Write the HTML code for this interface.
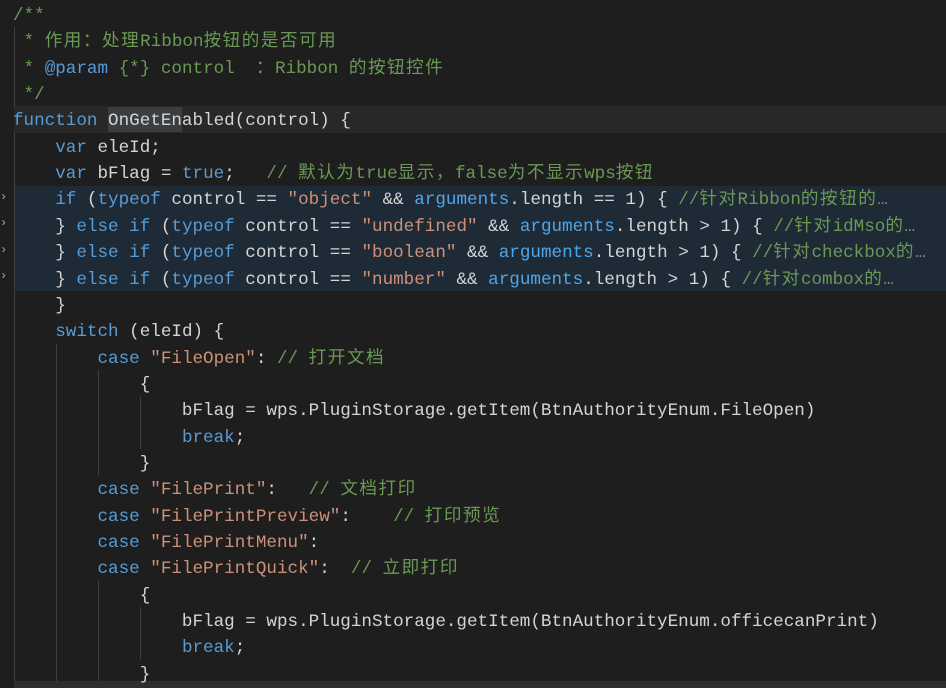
<!DOCTYPE html>
<html><head><meta charset="utf-8"><style>
body{margin:0;width:946px;height:688px;background:#1e1e1e;overflow:hidden;position:relative;font-family:"Liberation Mono","Noto Sans CJK SC",monospace;font-size:17.6px;color:#d4d4d4}
.l{position:absolute;left:13px;white-space:pre;height:26.35px;line-height:26.35px;margin-top:2px}
.k{color:#569cd6}.s{color:#ce9178}.c{color:#6a9955}.a{color:#4fa6e8}
.z{letter-spacing:1.5px}
.g{position:absolute;width:1px;background:#404040}
.bg{position:absolute;left:14px;right:0}
.m{position:absolute;left:0;color:#aaa;font-size:12px}
</style></head><body>
<div class="bg" style="top:106.4px;height:26.35px;background:#282828"></div>
<div style="position:absolute;left:108px;top:107px;width:74px;height:25px;background:#3a3d41"></div>
<div class="bg" style="top:185.5px;height:105.4px;background:#1f2a37"></div>
<div class="g" style="left:14px;top:27px;height:80px"></div>
<div class="g" style="left:14px;top:133px;height:555px"></div>
<div class="g" style="left:56px;top:344px;height:344px"></div>
<div class="g" style="left:98px;top:370px;height:106px"></div>
<div class="g" style="left:98px;top:581px;height:107px"></div>
<div class="g" style="left:140px;top:396px;height:53px"></div>
<div class="g" style="left:140px;top:607px;height:53px"></div>
<div style="position:absolute;left:14px;right:0;top:681px;height:7px;background:#2e2e2e"></div>
<div class="m" style="top:190px">›</div><div class="m" style="top:216px">›</div><div class="m" style="top:243px">›</div><div class="m" style="top:269px">›</div>
<div class="l c" style="top:1px">/**</div>
<div class="l c" style="top:27.35px"> * <span class="z">作用：处理</span>Ribbon<span class="z">按钮的是否可用</span></div>
<div class="l c" style="top:53.7px"> * <span class="k">@param</span> {*} control  <span class="z">：</span>Ribbon <span class="z">的按钮控件</span></div>
<div class="l c" style="top:80.05px"> */</div>
<div class="l" style="top:106.4px"><span class="k">function</span> OnGetEnabled(control) {</div>
<div class="l" style="top:132.75px">    <span class="k">var</span> eleId;</div>
<div class="l" style="top:159.1px">    <span class="k">var</span> bFlag = <span class="k">true</span>;   <span class="c">// <span class="z">默认为</span>true<span class="z">显示，</span>false<span class="z">为不显示</span>wps<span class="z">按钮</span></span></div>
<div class="l" style="top:185.45px">    <span class="k">if</span> (<span class="k">typeof</span> control == <span class="s">"object"</span> &amp;&amp; <span class="a">arguments</span>.length == 1) { <span class="c">//<span class="z">针对</span>Ribbon<span class="z">的按钮的</span></span><span style="color:#888">…</span></div>
<div class="l" style="top:211.8px">    } <span class="k">else if</span> (<span class="k">typeof</span> control == <span class="s">"undefined"</span> &amp;&amp; <span class="a">arguments</span>.length &gt; 1) { <span class="c">//<span class="z">针对</span>idMso<span class="z">的</span></span><span style="color:#888">…</span></div>
<div class="l" style="top:238.15px">    } <span class="k">else if</span> (<span class="k">typeof</span> control == <span class="s">"boolean"</span> &amp;&amp; <span class="a">arguments</span>.length &gt; 1) { <span class="c">//<span class="z">针对</span>checkbox<span class="z">的</span></span><span style="color:#888">…</span></div>
<div class="l" style="top:264.5px">    } <span class="k">else if</span> (<span class="k">typeof</span> control == <span class="s">"number"</span> &amp;&amp; <span class="a">arguments</span>.length &gt; 1) { <span class="c">//<span class="z">针对</span>combox<span class="z">的</span></span><span style="color:#888">…</span></div>
<div class="l" style="top:290.85px">    }</div>
<div class="l" style="top:317.2px">    <span class="k">switch</span> (eleId) {</div>
<div class="l" style="top:343.55px">        <span class="k">case</span> <span class="s">"FileOpen"</span>: <span class="c">// <span class="z">打开文档</span></span></div>
<div class="l" style="top:369.9px">            {</div>
<div class="l" style="top:396.25px">                bFlag = wps.PluginStorage.getItem(BtnAuthorityEnum.FileOpen)</div>
<div class="l" style="top:422.6px">                <span class="k">break</span>;</div>
<div class="l" style="top:448.95px">            }</div>
<div class="l" style="top:475.3px">        <span class="k">case</span> <span class="s">"FilePrint"</span>:   <span class="c">// <span class="z">文档打印</span></span></div>
<div class="l" style="top:501.65px">        <span class="k">case</span> <span class="s">"FilePrintPreview"</span>:    <span class="c">// <span class="z">打印预览</span></span></div>
<div class="l" style="top:528px">        <span class="k">case</span> <span class="s">"FilePrintMenu"</span>:</div>
<div class="l" style="top:554.35px">        <span class="k">case</span> <span class="s">"FilePrintQuick"</span>:  <span class="c">// <span class="z">立即打印</span></span></div>
<div class="l" style="top:580.7px">            {</div>
<div class="l" style="top:607.05px">                bFlag = wps.PluginStorage.getItem(BtnAuthorityEnum.officecanPrint)</div>
<div class="l" style="top:633.4px">                <span class="k">break</span>;</div>
<div class="l" style="top:659.75px">            }</div>
</body></html>
